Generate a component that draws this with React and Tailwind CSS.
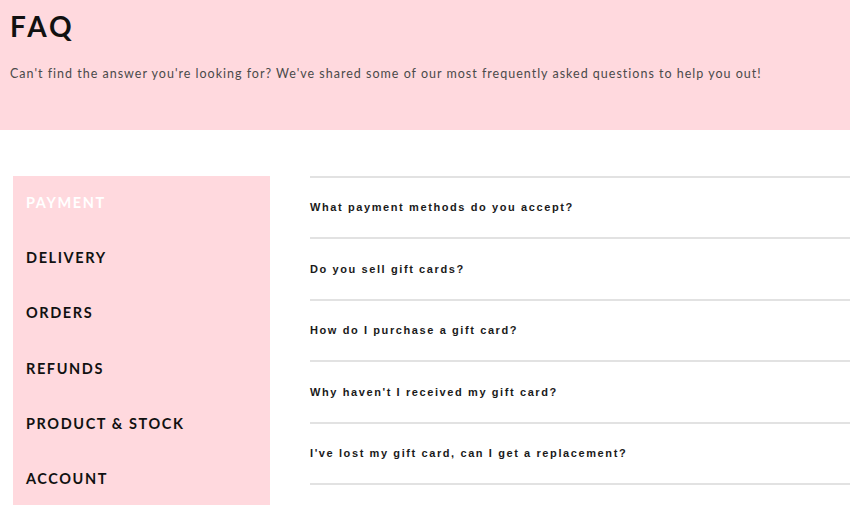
import React from 'react';

const categories = ['PAYMENT', 'DELIVERY', 'ORDERS', 'REFUNDS', 'PRODUCT & STOCK', 'ACCOUNT'];

const questions = [
  'What payment methods do you accept?',
  'Do you sell gift cards?',
  'How do I purchase a gift card?',
  "Why haven't I received my gift card?",
  "I've lost my gift card, can I get a replacement?",
];

export default function App() {
  return (
    <div className="w-[850px] h-[505px] overflow-hidden bg-white" style={{ fontFamily: 'Lato, "Liberation Sans", sans-serif' }}>
      <header className="h-[130px] bg-[#ffd9de] px-[10px] pt-[9px]">
        <h1 className="text-[28px] leading-[34px] font-bold tracking-[3px] text-[#111]">FAQ</h1>
        <p className="mt-[22px] text-[12.5px] tracking-[1px] text-[#4a4a4a]">
          Can't find the answer you're looking for? We've shared some of our most frequently asked questions to help you out!
        </p>
      </header>

      <div className="flex pt-[46px]">
        <nav className="ml-[13px] w-[257px] h-[340px] bg-[#ffd9de] pl-[13px] pt-[17px]">
          {categories.map((c, i) => (
            <div
              key={c}
              className={`h-[55.2px] text-[14.5px] font-bold tracking-[1.6px] leading-[20px] ${
                i === 0 ? 'text-white' : 'text-[#111]'
              }`}
            >
              {c}
            </div>
          ))}
        </nav>

        <div className="ml-[40px] flex-1 border-t-2 border-[#e2e2e2]">
          {questions.map(q => (
            <div key={q} className="h-[61.4px] border-b-2 border-[#e2e2e2] flex items-center">
              <span
                className="text-[11px] font-bold tracking-[1.6px] text-[#1a1a1a]"
                style={{ fontFamily: '"Liberation Sans", Arial, sans-serif' }}
              >
                {q}
              </span>
            </div>
          ))}
        </div>
      </div>
    </div>
  );
}
